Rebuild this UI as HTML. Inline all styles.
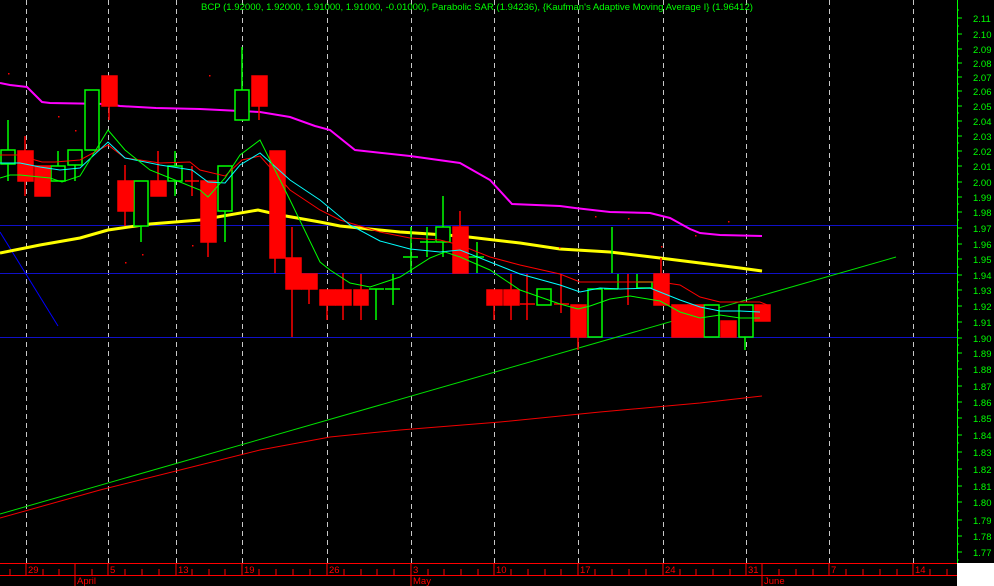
<!DOCTYPE html>
<html><head><meta charset="utf-8"><style>
html,body{margin:0;padding:0;background:#000;width:994px;height:586px;overflow:hidden}
svg{display:block}
text{font-family:"Liberation Sans",sans-serif}
</style></head><body>
<svg width="994" height="586" viewBox="0 0 994 586" xmlns="http://www.w3.org/2000/svg">
<rect width="994" height="586" fill="#000"/>
<!-- grid dashed verticals -->
<g stroke="#c8c8c8" stroke-width="1" stroke-dasharray="5,4">
<line x1="26.5" y1="0" x2="26.5" y2="563"/><line x1="108.5" y1="0" x2="108.5" y2="563"/>
<line x1="176.5" y1="0" x2="176.5" y2="563"/><line x1="242.5" y1="0" x2="242.5" y2="563"/>
<line x1="327.5" y1="0" x2="327.5" y2="563"/><line x1="411.5" y1="0" x2="411.5" y2="563"/>
<line x1="494.5" y1="0" x2="494.5" y2="563"/><line x1="578.5" y1="0" x2="578.5" y2="563"/>
<line x1="663.5" y1="0" x2="663.5" y2="563"/><line x1="746.5" y1="0" x2="746.5" y2="563"/>
<line x1="829.5" y1="0" x2="829.5" y2="563"/><line x1="913.5" y1="0" x2="913.5" y2="563"/>
</g>
<g stroke="#1010c8" stroke-width="1">
<line x1="0" y1="225.5" x2="957" y2="225.5"/><line x1="0" y1="273.5" x2="957" y2="273.5"/><line x1="0" y1="337.5" x2="957" y2="337.5"/>
</g>
<!-- title -->
<text x="477" y="10" fill="#00ff00" font-size="9.5" text-anchor="middle" textLength="552" lengthAdjust="spacingAndGlyphs">BCP (1.92000, 1.92000, 1.91000, 1.91000, -0.01000), Parabolic SAR (1.94236), {Kaufman's Adaptive Moving Average I} (1.96412)</text>
<!-- long lines -->
<polyline fill="none" stroke="#00e000" stroke-width="1" points="0,514 896,257"/>
<polyline fill="none" stroke="#f00000" stroke-width="1" points="0,518 100,490 200,465 260,450 330,437 400,430 500,422 600,412 700,403 762,396"/>
<polyline fill="none" stroke="#0000ff" stroke-width="1" points="0,232 58,326"/>
<polyline fill="none" stroke="#ff00ff" stroke-width="2" points="0,83 10,85 27,87 42,102 50,103 108,104 120,106 156,108 200,109 260,112 290,117 315,126 330,130 355,150 410,156 460,163 490,180 512,204 560,206 575,208 610,212 650,213 670,218 690,229 700,233 720,235 762,236"/>
<polyline fill="none" stroke="#ffff00" stroke-width="3" points="0,253 40,245 80,238 108,230 150,224 200,220 258,210 280,215 320,222 340,226 400,232 460,236 520,243 560,249 610,252 660,258 700,263 740,268 762,271"/>
<!-- candles -->
<g stroke-width="1.5">
<g stroke="#00ff00" fill="none">
<line x1="8" y1="120" x2="8" y2="181"/><rect x="1" y="150" width="14" height="14" fill="#000"/>
<line x1="58" y1="151" x2="58" y2="181"/><rect x="51" y="166" width="14" height="15" fill="#000"/>
<line x1="75" y1="150" x2="75" y2="181"/><rect x="68" y="150" width="14" height="15" fill="#000"/>
<rect x="85" y="90" width="14" height="60" fill="#000"/>
<line x1="141" y1="226" x2="141" y2="242"/><rect x="134" y="181" width="14" height="45" fill="#000"/>
<line x1="175" y1="151" x2="175" y2="196"/><rect x="168" y="166" width="14" height="15" fill="#000"/>
<line x1="225" y1="211" x2="225" y2="242"/><rect x="218" y="166" width="14" height="45" fill="#000"/>
<line x1="242" y1="47" x2="242" y2="120"/><rect x="235" y="90" width="14" height="30" fill="#000"/>
<line x1="376" y1="289" x2="376" y2="320"/><line x1="369" y1="289" x2="384" y2="289"/>
<line x1="393" y1="274" x2="393" y2="305"/><line x1="385" y1="289" x2="400" y2="289"/>
<line x1="411" y1="227" x2="411" y2="273"/><line x1="403" y1="257" x2="418" y2="257"/>
<line x1="427" y1="227" x2="427" y2="257"/><line x1="420" y1="242" x2="435" y2="242"/>
<line x1="443" y1="196" x2="443" y2="257"/><rect x="436" y="227" width="14" height="15" fill="#000"/>
<line x1="477" y1="242" x2="477" y2="273"/><line x1="464" y1="257" x2="484" y2="257"/>
<rect x="537" y="289" width="14" height="16" fill="#000"/>
<rect x="588" y="289" width="14" height="48" fill="#000"/>
<line x1="612" y1="227" x2="612" y2="273"/><line x1="604" y1="289" x2="618" y2="289"/>
<line x1="618" y1="274" x2="618" y2="289"/>
<line x1="637" y1="274" x2="637" y2="289"/><rect x="637" y="282" width="15" height="6"/>
<rect x="704" y="305" width="15" height="32" fill="#000"/>
<line x1="745" y1="337" x2="745" y2="350"/><rect x="739" y="305" width="14" height="32" fill="#000"/>
</g>
<g stroke="#ff0000" fill="#ff0000">
<line x1="25" y1="136" x2="25" y2="196"/><rect x="18" y="151" width="15" height="30"/>
<rect x="35" y="166" width="15" height="30"/>
<line x1="109" y1="76" x2="109" y2="120"/><rect x="102" y="76" width="15" height="30"/>
<line x1="125" y1="165" x2="125" y2="226"/><rect x="118" y="181" width="15" height="30"/>
<line x1="158" y1="151" x2="158" y2="196"/><rect x="151" y="181" width="15" height="15"/>
<line x1="192" y1="166" x2="192" y2="196"/><line x1="185" y1="181" x2="199" y2="181"/>
<line x1="208" y1="181" x2="208" y2="257"/><rect x="201" y="181" width="15" height="61"/>
<line x1="259" y1="76" x2="259" y2="120"/><rect x="252" y="76" width="15" height="30"/>
<line x1="275" y1="151" x2="275" y2="273"/><rect x="270" y="151" width="15" height="107"/>
<line x1="292" y1="227" x2="292" y2="337"/><rect x="286" y="258" width="15" height="31"/>
<line x1="309" y1="274" x2="309" y2="304"/><rect x="302" y="274" width="15" height="15"/>
<line x1="327" y1="290" x2="327" y2="320"/><rect x="320" y="290" width="15" height="15"/>
<line x1="343" y1="273" x2="343" y2="320"/><rect x="336" y="290" width="15" height="15"/>
<line x1="361" y1="274" x2="361" y2="320"/><rect x="354" y="290" width="14" height="15"/>
<line x1="460" y1="211" x2="460" y2="273"/><rect x="453" y="227" width="15" height="46"/>
<line x1="494" y1="290" x2="494" y2="320"/><rect x="487" y="290" width="15" height="15"/>
<line x1="511" y1="274" x2="511" y2="320"/><rect x="504" y="290" width="15" height="15"/>
<line x1="527" y1="274" x2="527" y2="320"/><line x1="520" y1="304" x2="535" y2="304"/>
<line x1="561" y1="274" x2="561" y2="313"/><line x1="554" y1="304" x2="569" y2="304"/>
<line x1="578" y1="305" x2="578" y2="350"/><rect x="571" y="305" width="15" height="32"/>
<line x1="628" y1="274" x2="628" y2="305"/>
<line x1="661" y1="258" x2="661" y2="305"/><rect x="654" y="274" width="15" height="31"/>
<rect x="672" y="305" width="15" height="32"/>
<rect x="688" y="305" width="15" height="32"/>
<rect x="721" y="321" width="15" height="16"/>
<rect x="755" y="305" width="15" height="16"/>
</g>
</g>
<!-- MAs -->
<polyline fill="none" stroke="#ff0000" stroke-width="1" points="0,155 20,155 35,160 42,162 55,162 80,160 108,145 125,158 140,160 160,163 190,162 200,170 225,176 242,160 260,156 290,190 320,210 340,220 380,232 410,238 440,240 460,245 490,257 520,265 560,274 580,282 620,282 660,282 680,285 700,297 720,302 760,302 770,306"/>
<polyline fill="none" stroke="#00ffff" stroke-width="1" points="0,163 20,163 40,167 60,170 80,168 108,142 125,158 160,165 192,170 208,182 225,183 240,165 260,153 290,180 320,200 350,225 380,241 410,249 440,252 460,250 490,262 520,274 560,285 580,292 600,288 620,289 650,288 680,300 700,307 720,311 740,311 760,312"/>
<polyline fill="none" stroke="#00ff00" stroke-width="1" points="0,178 10,175 20,175 50,178 62,182 80,176 108,130 125,150 150,170 175,180 200,190 208,197 225,178 240,155 260,140 290,200 320,262 330,270 350,283 370,287 400,277 430,258 445,252 460,257 490,270 520,290 560,304 578,309 590,306 610,299 630,296 660,301 680,312 700,318 720,315 740,318 760,318"/>
<!-- SAR dots -->
<g fill="#ff0000"><rect x="8" y="73" width="1.5" height="1.5"/><rect x="58" y="116" width="1.5" height="1.5"/><rect x="75" y="130" width="1.5" height="1.5"/><rect x="209" y="75" width="1.5" height="1.5"/><rect x="192" y="245" width="1.5" height="1.5"/><rect x="142" y="254" width="1.5" height="1.5"/><rect x="125" y="262" width="1.5" height="1.5"/><rect x="559" y="247" width="1.5" height="1.5"/><rect x="595" y="216" width="1.5" height="1.5"/><rect x="628" y="218" width="1.5" height="1.5"/><rect x="661" y="246" width="1.5" height="1.5"/><rect x="695" y="235" width="1.5" height="1.5"/><rect x="728" y="221" width="1.5" height="1.5"/></g>
<!-- right axis -->
<line x1="957.5" y1="0" x2="957.5" y2="563" stroke="#00ff00" stroke-width="1"/>
<g stroke="#00ff00" stroke-width="1">
<path d="M957 18h5M957 34h5M957 49h5M957 63h5M957 77h5M957 91h5M957 106h5M957 121h5M957 136h5M957 151h5M957 166h5M957 182h5M957 197h5M957 212h5M957 228h5M957 244h5M957 259h5M957 275h5M957 290h5M957 306h5M957 322h5M957 338h5M957 353h5M957 369h5M957 386h5M957 402h5M957 418h5M957 435h5M957 452h5M957 469h5M957 486h5M957 502h5M957 520h5M957 536h5M957 552h5"/>
<path d="M957 10h2M957 26h2M957 41h2M957 56h2M957 70h2M957 84h2M957 98h2M957 113h2M957 128h2M957 143h2M957 158h2M957 174h2M957 189h2M957 204h2M957 220h2M957 236h2M957 251h2M957 267h2M957 282h2M957 298h2M957 314h2M957 330h2M957 345h2M957 361h2M957 377h2M957 394h2M957 410h2M957 427h2M957 443h2M957 460h2M957 477h2M957 494h2M957 511h2M957 528h2M957 544h2M957 560h2"/>
</g>
<g fill="#00ff00" font-size="9.5">
<text x="973" y="22">2.11</text><text x="973" y="38">2.10</text><text x="973" y="53">2.09</text><text x="973" y="67">2.08</text><text x="973" y="81">2.07</text><text x="973" y="95">2.06</text><text x="973" y="110">2.05</text><text x="973" y="125">2.04</text><text x="973" y="140">2.03</text><text x="973" y="155">2.02</text><text x="973" y="170">2.01</text><text x="973" y="186">2.00</text><text x="973" y="201">1.99</text><text x="973" y="216">1.98</text><text x="973" y="232">1.97</text><text x="973" y="248">1.96</text><text x="973" y="263">1.95</text><text x="973" y="279">1.94</text><text x="973" y="294">1.93</text><text x="973" y="310">1.92</text><text x="973" y="326">1.91</text><text x="973" y="342">1.90</text><text x="973" y="357">1.89</text><text x="973" y="373">1.88</text><text x="973" y="390">1.87</text><text x="973" y="406">1.86</text><text x="973" y="422">1.85</text><text x="973" y="439">1.84</text><text x="973" y="456">1.83</text><text x="973" y="473">1.82</text><text x="973" y="490">1.81</text><text x="973" y="506">1.80</text><text x="973" y="524">1.79</text><text x="973" y="540">1.78</text><text x="973" y="556">1.77</text>
</g>
<!-- bottom axis -->
<rect x="957" y="563" width="37" height="23" fill="#fff"/>
<g stroke="#ff0000" stroke-width="1">
<line x1="0" y1="563.5" x2="957" y2="563.5"/><line x1="0" y1="575.5" x2="957" y2="575.5"/>
<path d="M26 563v12M108 563v12M176 563v12M242 563v12M327 563v12M411 563v12M494 563v12M578 563v12M663 563v12M746 563v12M829 563v12M913 563v12M75 563v23M411 563v23M762 563v23"/>
<path d="M10 569v6M43 569v6M59 569v6M92 569v6M125 569v6M142 569v6M159 569v6M192 569v6M209 569v6M225 569v6M259 569v6M276 569v6M293 569v6M310 569v6M344 569v6M361 569v6M377 569v6M394 569v6M428 569v6M444 569v6M461 569v6M478 569v6M511 569v6M528 569v6M545 569v6M561 569v6M595 569v6M612 569v6M629 569v6M646 569v6M680 569v6M696 569v6M713 569v6M730 569v6M779 569v6M796 569v6M813 569v6M846 569v6M863 569v6M880 569v6M897 569v6M930 569v6M947 569v6"/>
</g>
<g fill="#ff0000" font-size="9.5">
<text x="28" y="573">29</text><text x="110" y="573">5</text><text x="178" y="573">13</text><text x="244" y="573">19</text><text x="329" y="573">26</text><text x="413" y="573">3</text><text x="496" y="573">10</text><text x="580" y="573">17</text><text x="665" y="573">24</text><text x="748" y="573">31</text><text x="831" y="573">7</text><text x="915" y="573">14</text>
<text x="77" y="584">April</text><text x="413" y="584">May</text><text x="764" y="584">June</text>
</g>
</svg>
</body></html>
